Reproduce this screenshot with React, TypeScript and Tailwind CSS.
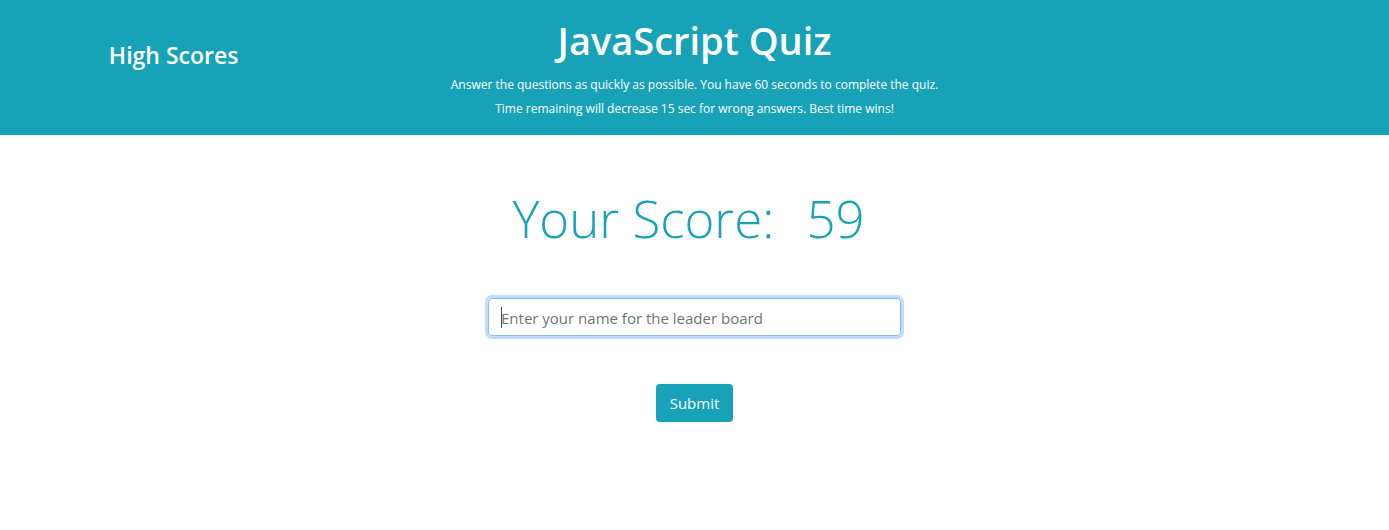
import { useState } from "react";

export default function App() {
  const [name, setName] = useState("");

  return (
    <div className="bg-white font-['Open_Sans','Noto_Sans',sans-serif] text-[#212529]">
      <header className="grid grid-cols-[1fr_2fr_1fr] bg-[#17a2b8] pt-4 pb-3.5 text-white">
        <a href="#scores" className="justify-self-center pt-[23px] text-[23px] leading-8 font-semibold">
          High Scores
        </a>
        <div className="text-center">
          <h1 className="mb-[9px] text-[38px] leading-12 font-semibold">JavaScript Quiz</h1>
          <p className="text-xs leading-6">
            Answer the questions as quickly as possible. You have 60 seconds to complete the quiz.
            <br />
            Time remaining will decrease 15 sec for wrong answers. Best time wins!
          </p>
        </div>
      </header>
      <main className="flex flex-col items-center pt-[50px]">
        <h2 className="flex gap-8 pr-3 text-[51px] leading-[67px] font-light text-[#17a2b8]">
          <span>Your Score:</span>
          <span>59</span>
        </h2>
        <form
          className="flex w-[413px] max-w-full flex-col items-center gap-12 pt-[46px]"
          onSubmit={(e) => e.preventDefault()}
        >
          <div className="relative w-full">
            <input
              type="text"
              autoFocus
              value={name}
              onChange={(e) => setName(e.target.value)}
              aria-label="Your name"
              placeholder="Enter your name for the leader board"
              className="block h-[38px] w-full rounded border border-[#80bdff] px-3 pt-0.5 text-[15px] text-[#495057] shadow-[0_0_0_3px_#bfdeff] outline-none placeholder:text-[#6c757d]"
            />
            {name === "" && (
              <span className="pointer-events-none absolute top-[9px] left-[13px] h-[21px] w-px bg-[#495057]" />
            )}
          </div>
          <button type="submit" className="h-[38px] rounded bg-[#17a2b8] px-3.5 text-[15px] text-white">
            Submit
          </button>
        </form>
      </main>
    </div>
  );
}
